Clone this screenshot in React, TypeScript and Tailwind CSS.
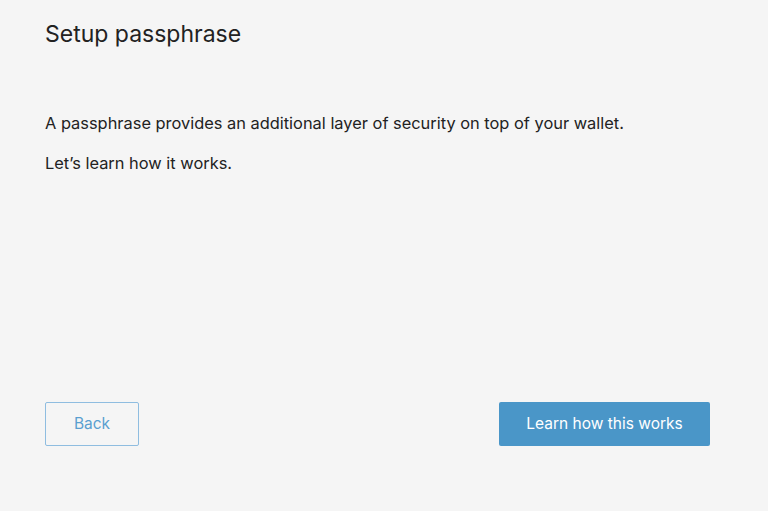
import React from 'react';

const App: React.FC = () => {
  return (
    <div
      className="flex h-[511px] w-[768px] flex-col bg-[#f5f5f5] pl-[45px] pr-[58px] text-[#222]"
      style={{ fontFamily: 'Inter, "Noto Sans", sans-serif' }}
    >
      <h1 className="mt-[18px] text-[23px] leading-[32px] font-normal">Setup passphrase</h1>

      <div className="mt-[62px] flex flex-col gap-[18px] text-[16.4px] leading-[22px]">
        <p>A passphrase provides an additional layer of security on top of your wallet.</p>
        <p>Let’s learn how it works.</p>
      </div>

      <div className="mt-auto mb-[65px] flex items-center justify-between">
        <button className="h-[44px] w-[94px] rounded-[2px] border border-[#8fbde0] bg-transparent text-[15.5px] text-[#5a9fd0]">
          Back
        </button>
        <button className="h-[44px] w-[211px] rounded-[2px] bg-[#4a96c8] text-[15.5px] text-white">
          Learn how this works
        </button>
      </div>
    </div>
  );
};

export default App;
